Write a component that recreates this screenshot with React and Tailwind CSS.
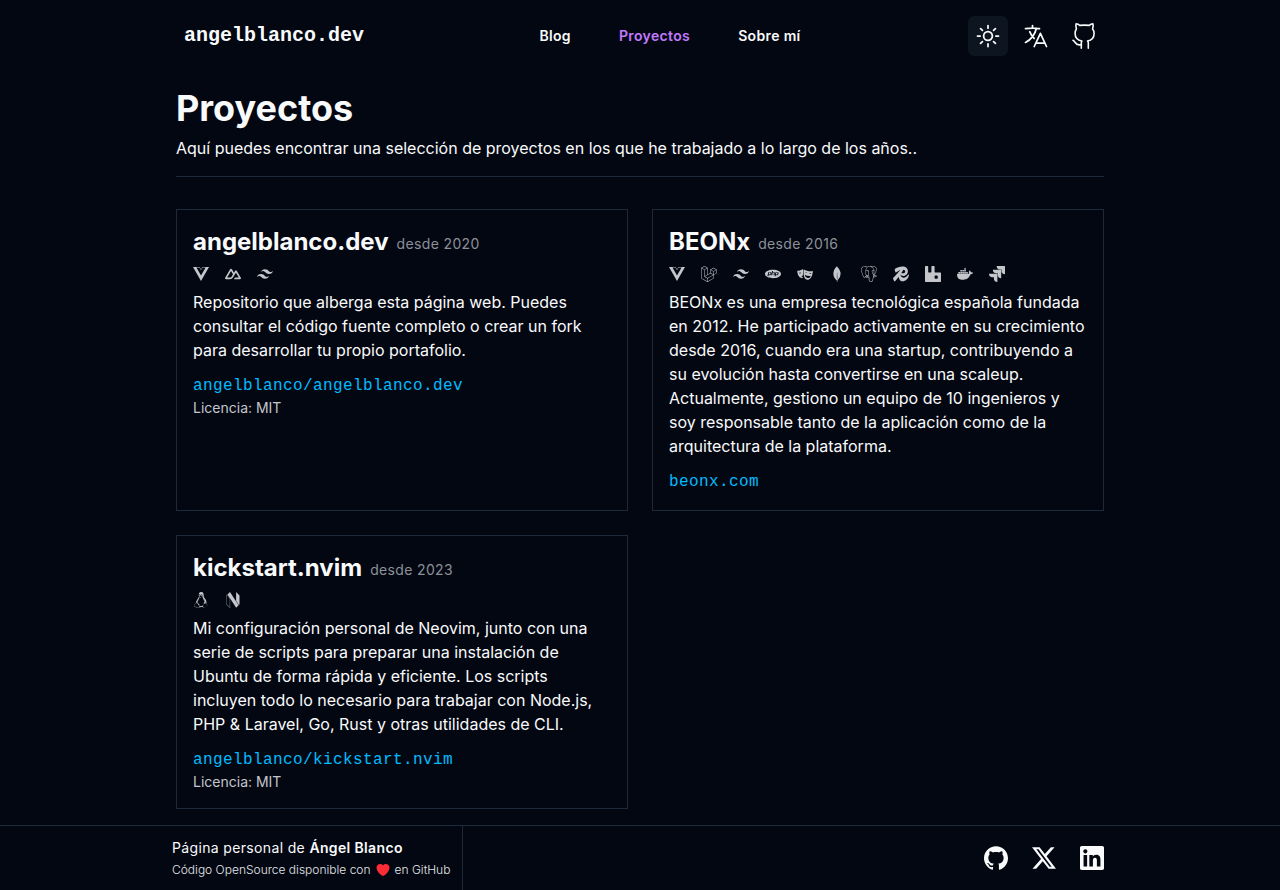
import {
  SiVuedotjs, SiNuxtdotjs, SiTailwindcss, SiLaravel, SiPhp, SiMongodb, SiPostgresql, SiRedis,
  SiRabbitmq, SiDocker, SiJira, SiLinux, SiNeovim, SiGithub, SiX, SiLinkedin,
} from "react-icons/si";
import { HiOutlineLanguage, HiOutlineSun, HiHeart } from "react-icons/hi2";

const MONO = "font-['Liberation_Mono',monospace]";

function MasksIcon({ className }) {
  return (
    <svg viewBox="0 0 24 24" className={className} fill="currentColor" fillRule="evenodd" aria-hidden="true">
      <path d="M0.300 7.200C3.500 7.300 6.300 6.500 9 4.600l.5 2.200-.9 7.900-2.500.9 2.700.8c-.1.900-.4 1.500-.9 2.100C3.600 18.200.600 13.400.300 7.200zM2.600 10.600c.9-.9 2.200-1.100 3.300-.6-.5 1.300-2.100 1.800-3.300.6z" />
      <path d="M10.300 5.200c4.200 2.400 8.700 3.200 13.500 2.300-.3 6.900-3.300 13.200-8.200 13.300-4.900-.6-6.700-8.200-5.300-15.600zM12.100 9.900c1.100-1 2.600-.8 3.400.7-1.100-.5-2.200-.6-3.400-.7zM18.200 11.300c1.100-1 2.700-.8 3.400.7-1.100-.5-2.200-.6-3.400-.7zM11.700 13.200c2.700 1.600 5.600 2.200 8.900 1.700-.8 2.100-2.400 3.300-4.600 3.100-2.400-.4-4-2.200-4.300-4.800z" />
    </svg>
  );
}

const projects = [
  {
    name: "angelblanco.dev",
    since: "desde 2020",
    icons: [SiVuedotjs, SiNuxtdotjs, SiTailwindcss],
    text: "Repositorio que alberga esta página web. Puedes consultar el código fuente completo o crear un fork para desarrollar tu propio portafolio.",
    link: "angelblanco/angelblanco.dev",
    license: "Licencia: MIT",
  },
  {
    name: "BEONx",
    since: "desde 2016",
    icons: [
      SiVuedotjs, SiLaravel, SiTailwindcss, SiPhp, MasksIcon, SiMongodb,
      SiPostgresql, SiRedis, SiRabbitmq, SiDocker, SiJira,
    ],
    text: "BEONx es una empresa tecnológica española fundada en 2012. He participado activamente en su crecimiento desde 2016, cuando era una startup, contribuyendo a su evolución hasta convertirse en una scaleup. Actualmente, gestiono un equipo de 10 ingenieros y soy responsable tanto de la aplicación como de la arquitectura de la plataforma.",
    link: "beonx.com",
  },
  {
    name: "kickstart.nvim",
    since: "desde 2023",
    icons: [SiLinux, SiNeovim],
    text: "Mi configuración personal de Neovim, junto con una serie de scripts para preparar una instalación de Ubuntu de forma rápida y eficiente. Los scripts incluyen todo lo necesario para trabajar con Node.js, PHP & Laravel, Go, Rust y otras utilidades de CLI.",
    link: "angelblanco/kickstart.nvim",
    license: "Licencia: MIT",
  },
];

function OctocatIcon() {
  return (
    <svg viewBox="0 0 28 28" className="size-7" fill="none" stroke="currentColor" strokeWidth="1.6" strokeLinecap="round" strokeLinejoin="round" aria-hidden="true">
      <path d="M11.300 26.300v-5.300c0-.9.200-1.500.6-2C7.600 18.300 5.100 16 5.100 11.500c0-1.900.4-3.300 1.300-4.500-.6-1.700-.7-3.500-.3-5.200 1.400.1 2.700.7 3.700 1.600 3.500-.4 6-.4 9.400 0 1-.9 2.200-1.500 3.700-1.600.5 1.700.4 3.500-.3 5.200 1 1.200 1.500 2.600 1.500 4.500 0 4.500-2.700 6.800-6.600 7.500.6.500.8 1.100.8 2v5.300" />
      <path d="M3 18.300c1 .4 1.500 1.100 2.200 2.200 1 1.600 2.300 2.400 4 2.400.7 0 1.400-.1 2.100-.2" />
    </svg>
  );
}

function Header() {
  const nav = "px-6 py-2 hover:text-purple-400";
  return (
    <header className="mx-auto flex w-full max-w-240 items-center justify-between p-4">
      <a href="#inicio" className={`px-2 text-xl font-bold ${MONO}`}>angelblanco.dev</a>
      <nav className="flex text-sm font-semibold tracking-wide">
        <a href="#blog" className={nav}>Blog</a>
        <a href="#proyectos" aria-current="page" className={`${nav} text-purple-400`}>Proyectos</a>
        <a href="#sobre-mi" className={nav}>Sobre mí</a>
      </nav>
      <div className="flex gap-2">
        <button type="button" aria-label="Tema" className="flex size-10 items-center justify-center rounded-md bg-[#0d1520]">
          <HiOutlineSun className="size-7" />
        </button>
        <button type="button" aria-label="Idioma" className="flex size-10 items-center justify-center rounded-md">
          <HiOutlineLanguage className="size-7" />
        </button>
        <a href="#github" aria-label="GitHub" className="flex size-10 items-center justify-center rounded-md">
          <OctocatIcon />
        </a>
      </div>
    </header>
  );
}

function Project({ name, since, icons, text, link, license }) {
  return (
    <article className="border border-gray-800 p-4">
      <div className="flex items-end gap-2">
        <h2 className="text-2xl font-bold">{name}</h2>
        <span className="text-sm/7 tracking-wide text-[#8d9099]">{since}</span>
      </div>
      <ul className="my-2 flex gap-4 text-[#c4c6cb]">
        {icons.map((Icon, i) => (
          <li key={i}><Icon className="size-4" /></li>
        ))}
      </ul>
      <p>{text}</p>
      <a href="#proyecto" className={`mt-3 block tracking-wide text-sky-400 ${MONO}`}>{link}</a>
      {license && <p className="text-sm text-[#c4c6cb]">{license}</p>}
    </article>
  );
}

export default function App() {
  return (
    <div className="flex min-h-screen flex-col bg-[#030712] font-[Inter,sans-serif] text-gray-50">
      <Header />
      <main className="mx-auto w-full max-w-240 grow p-4">
        <h1 className="text-4xl font-bold">Proyectos</h1>
        <p className="mt-2 border-b border-gray-800 pb-4">
          Aquí puedes encontrar una selección de proyectos en los que he trabajado a lo largo de los años..
        </p>
        <div className="mt-8 grid grid-cols-2 gap-6">
          {projects.map((p) => <Project key={p.name} {...p} />)}
        </div>
      </main>
      <footer className="border-t border-gray-800">
        <div className="mx-auto flex max-w-240 items-center justify-between">
          <div className="border-r border-gray-800 p-3">
            <p className="text-sm tracking-wide">Página personal de <strong className="font-semibold">Ángel Blanco</strong></p>
            <p className="flex items-center gap-1 pt-1 text-xs font-light text-gray-200">
              Código OpenSource disponible con <HiHeart className="size-4 text-red-500" /> en GitHub
            </p>
          </div>
          <div className="flex gap-6 px-4">
            <a href="#github" aria-label="GitHub"><SiGithub className="size-6" /></a>
            <a href="#x" aria-label="X"><SiX className="size-6" /></a>
            <a href="#linkedin" aria-label="LinkedIn"><SiLinkedin className="size-6" /></a>
          </div>
        </div>
      </footer>
    </div>
  );
}
